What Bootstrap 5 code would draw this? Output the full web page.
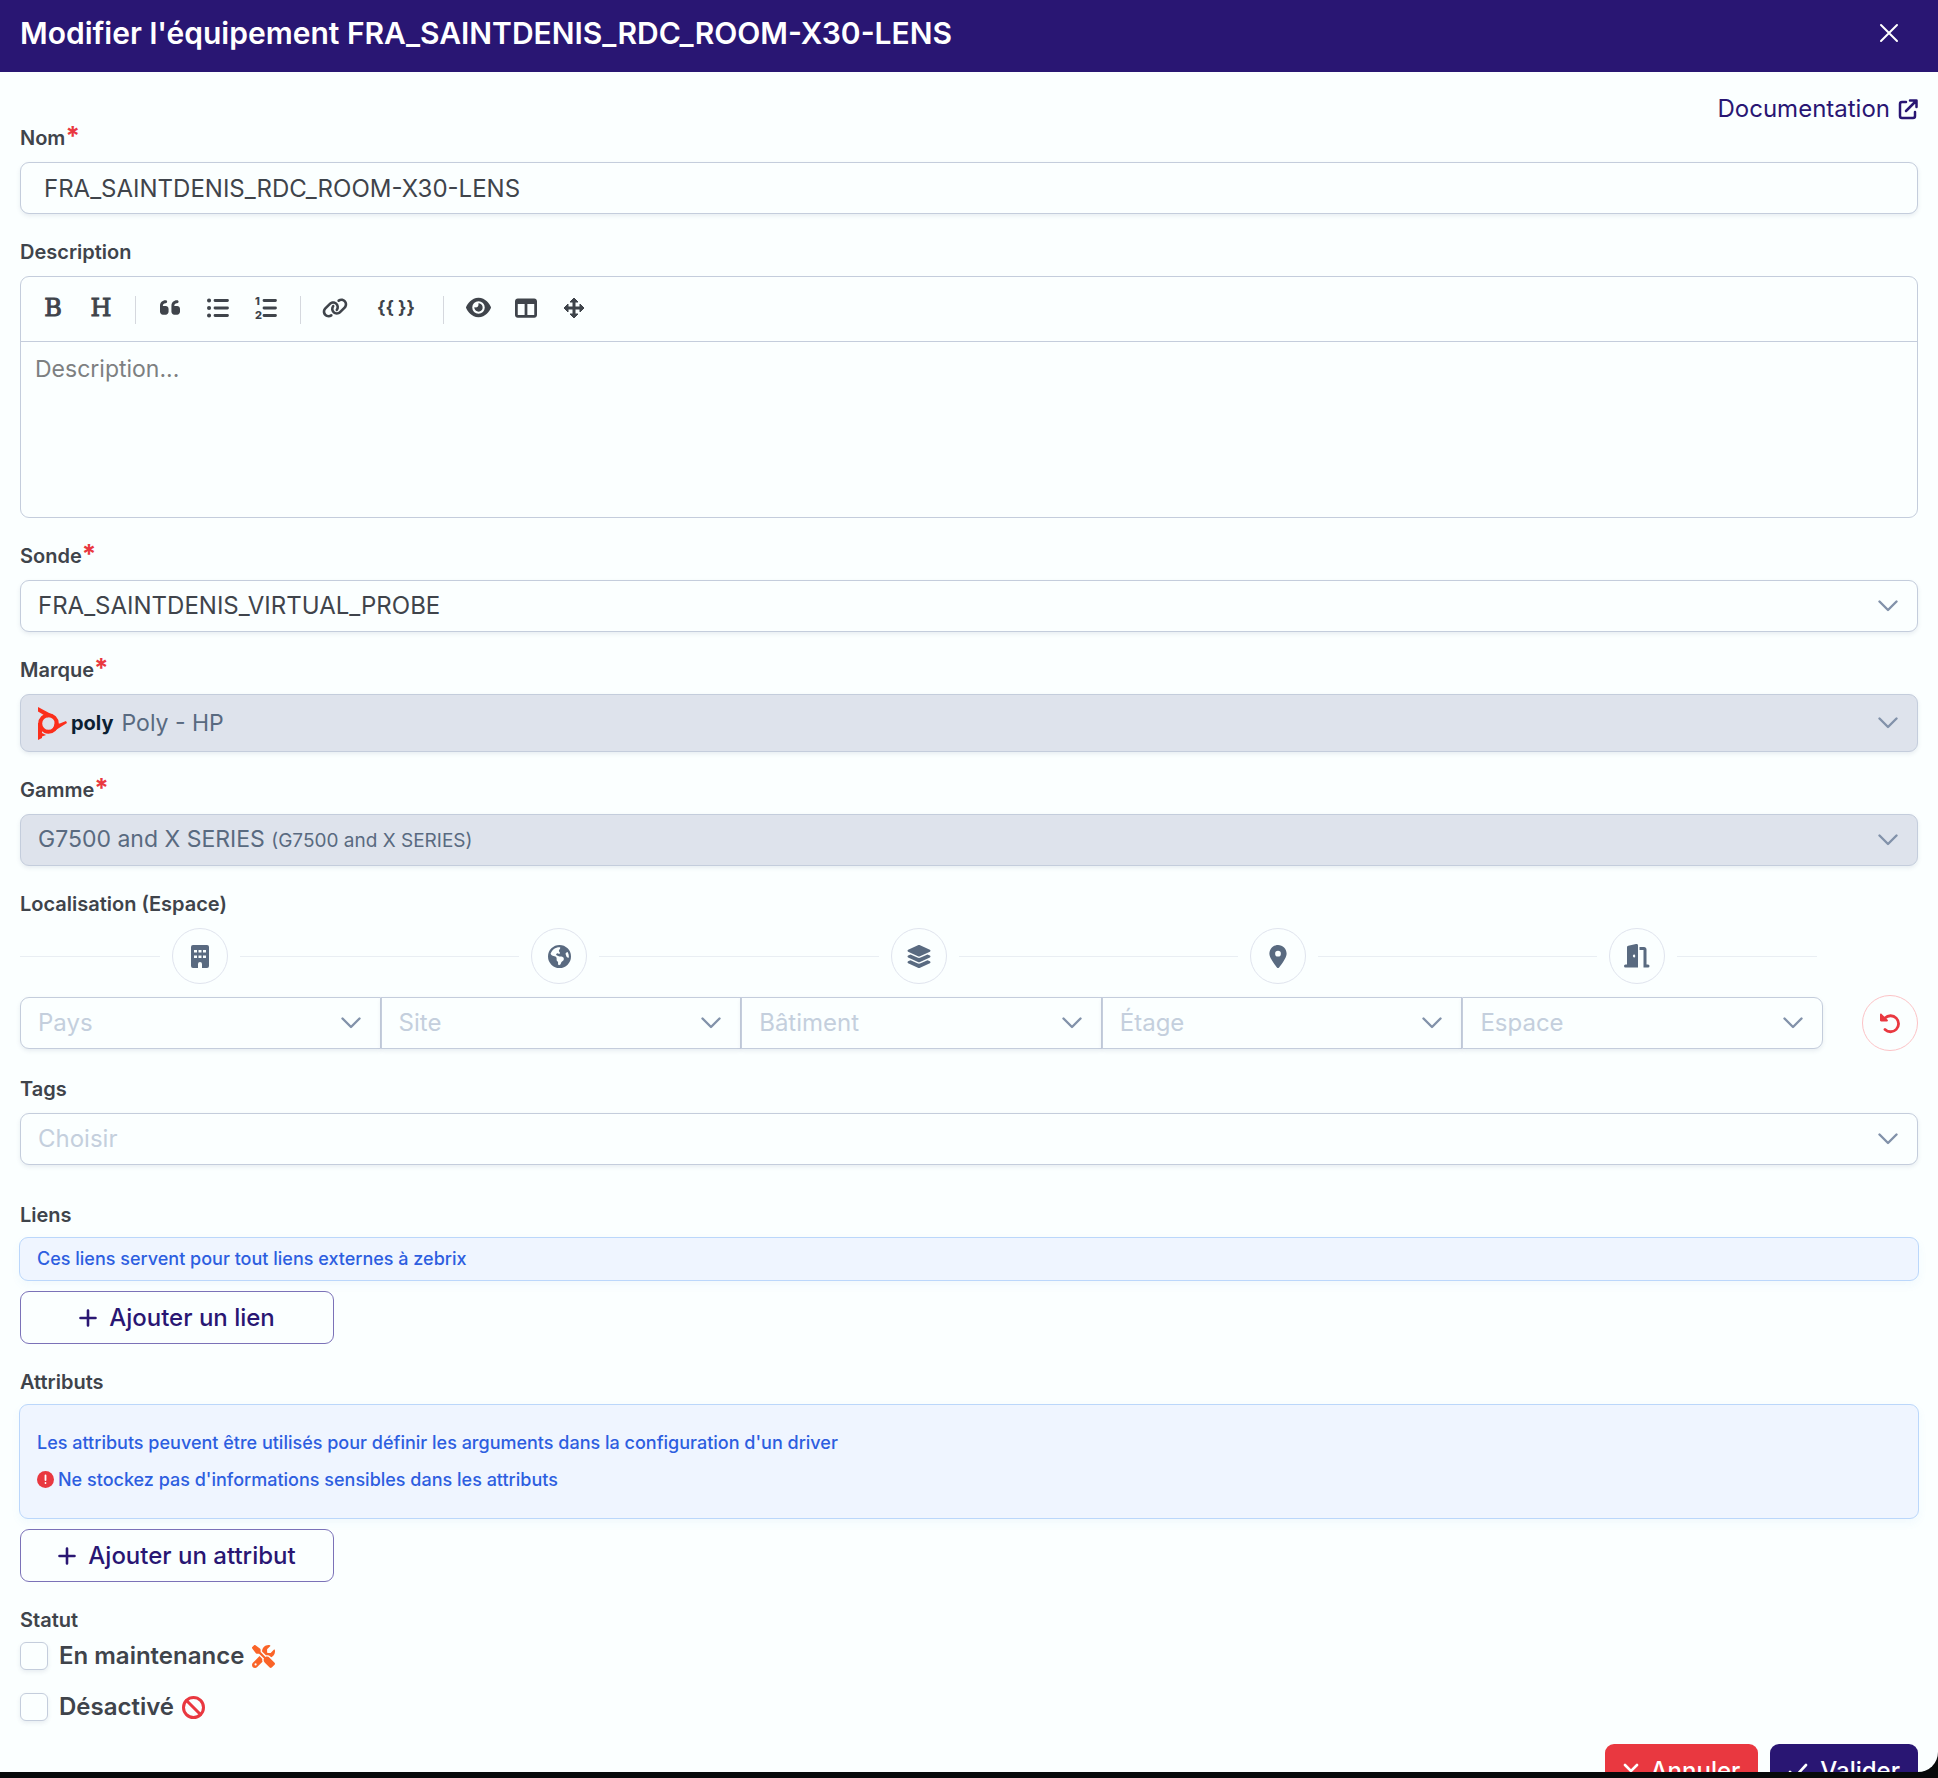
<!DOCTYPE html>
<html lang="fr">
<head>
<meta charset="utf-8">
<meta name="viewport" content="width=device-width, initial-scale=1">
<title>Modifier l'équipement</title>
<link href="https://cdn.jsdelivr.net/npm/bootstrap@5.3.0/dist/css/bootstrap.min.css" rel="stylesheet">
<style>
  :root { --ink: #3f444b; --brand: #291673; --edge: #c4cddc; --slate: #596a80; --danger: #e93840; --paper: #fbffff; }
  body { font-family: Inter, "Noto Sans", sans-serif; font-size: 24px; line-height: 34px; color: var(--ink); background: #07090a; height: 100vh; overflow: hidden; }
  svg { display: block; flex: none; fill: currentColor; overflow: visible; }
  .line-icon { fill: none; stroke: currentColor; stroke-linecap: round; stroke-linejoin: round; }
  .sheet { height: calc(100vh - 6px); background: var(--paper); border-bottom-right-radius: 20px; overflow: hidden; }
  .sheet-head { height: 72px; background: var(--brand); padding: 0 40px 6px 20px; }
  .sheet-title { font-size: 30px; font-weight: 600; line-height: 34px; }
  .plain-btn { background: none; border: 0; padding: 0; color: inherit; }
  .sheet-body { padding: 20px 20px 0; }
  .doc-link { color: var(--brand); }
  .field { margin-bottom: 26px; }
  .field-label { display: block; font-size: 20px; font-weight: 600; line-height: 24px; margin: 0 0 12px; }
  .label-tight { margin-bottom: 10px; }
  .field-label sup { color: var(--danger); font-size: 26px; line-height: 0; top: 0; font-weight: 700; vertical-align: baseline; }
  .form-control, .form-select { height: 52px; font-size: 24px; color: var(--ink); background-color: var(--paper); border: 1px solid var(--edge); border-radius: 9px; padding: 0 23px; box-shadow: 0 2px 4px rgba(60, 80, 120, .1); }
  .form-select { padding: 0 60px 0 17px; background-image: url("data:image/svg+xml,%3Csvg xmlns='http://www.w3.org/2000/svg' viewBox='0 0 20 12'%3E%3Cpath d='M1.5 1.5 10 10l8.500-8.500' fill='none' stroke='%238292aa' stroke-width='2.400' stroke-linecap='round' stroke-linejoin='round'/%3E%3C/svg%3E"); background-size: 20px 12px; background-position: right 19px center; }
  .form-select.unset { color: #c4cfdd; }
  .form-select:disabled { background-color: #dee3ec; color: transparent; opacity: 1; }
  .tall-select { height: 58px; }
  .rich-value { position: absolute; inset: 0 60px 0 18px; color: var(--slate); font-size: 23px; pointer-events: none; }
  .rich-value small { font-size: 19px; }
  .poly-word { color: #0b1f33; font-size: 20px; font-weight: 700; }
  .editor { border: 1px solid var(--edge); border-radius: 9px; }
  .editor-bar { height: 65px; border-bottom: 1px solid var(--edge); padding: 0 8px 3px; }
  .tool { width: 48px; height: 40px; display: flex; align-items: center; justify-content: center; }
  .tool-wide { width: 74px; font-size: 18px; font-weight: 700; }
  .slab { font-family: "DejaVu Serif", serif; font-size: 24px; -webkit-text-stroke: 1px currentColor; }
  .tool-sep { width: 1px; height: 28px; margin: 4px 10px 0; background: #d5d8de; }
  .editor textarea { height: 175px; border: 0; box-shadow: none; resize: none; background: transparent; padding: 10px 14px; font-size: 23px; line-height: 34px; display: block; }
  .editor textarea::placeholder { color: #7d8081; }
  .steps { padding-right: 101px; margin-bottom: 11px; }
  .step-line { height: 1px; background: #e9eef3; }
  .ring { width: 56px; height: 56px; border: 1px solid #e0e4ee; border-radius: 50%; color: var(--slate); display: flex; align-items: center; justify-content: center; flex: none; }
  .ring-reset { border: 1px solid #fbc3c6; color: var(--danger); }
  .places { gap: 39px; }
  .places .form-select { border-radius: 0; }
  .places .form-select:first-child { border-radius: 9px 0 0 9px; }
  .places .form-select:last-child { border-radius: 0 9px 9px 0; }
  .note { background: #eff5ff; border: 1px solid #bbd7fb; border-radius: 9px; color: #2d5ee0; font-size: 18px; font-weight: 500; line-height: 37px; margin: 0 -1px 10px; padding: 2px 17px 3px; box-shadow: 0 4px 10px rgba(60, 130, 220, .05); }
  .note-tall { padding: 19px 17px 20px; }
  .note p { margin: 0; }
  .add-btn { width: 314px; height: 53px; border: 1px solid #7b72b8; border-radius: 9px; color: var(--brand); background: var(--paper); font-size: 24px; font-weight: 500; gap: 12px; }
  .form-check-input.tick { width: 28px; height: 28px; margin: 0; border: 1px solid var(--edge); border-radius: 6px; background-color: var(--paper); box-shadow: 0 2px 4px rgba(60, 80, 120, .1); }
  .tick-row { height: 28px; gap: 11px; margin-bottom: 23px; font-weight: 600; }
  .act-btn { height: 53px; border: 0; border-radius: 9px; color: #fff; font-size: 24px; font-weight: 500; gap: 12px; padding: 0 18px; }
  .act-cancel { background: var(--danger); }
  .act-submit { background: var(--brand); }
  .icon-orange { color: #fa6428; }
  .icon-red { color: var(--danger); }
</style>
</head>
<body>
<main class="sheet d-flex flex-column">
  <header class="sheet-head d-flex align-items-center justify-content-between text-white flex-shrink-0">
    <h1 class="sheet-title m-0">Modifier l'équipement FRA_SAINTDENIS_RDC_ROOM-X30-LENS</h1>
    <button class="plain-btn" type="button" aria-label="Fermer"><svg class="line-icon" width="18" height="18" viewBox="0 0 18 18" stroke-width="2"><path d="M1 1l16 16M17 1L1 17"/></svg></button>
  </header>
  <form class="sheet-body">
    <div class="d-flex justify-content-end">
      <a class="doc-link d-flex align-items-center text-decoration-none gap-2" href="#">Documentation
        <svg class="line-icon" width="20" height="20" viewBox="0 0 20 20" stroke-width="2.500"><path d="M8 3H4a2 2 0 0 0-2 2v12a2 2 0 0 0 2 2h11a2 2 0 0 0 2-2v-4M12 1.500h6.500V8M18 2l-10 10"/></svg></a>
    </div>
    <div class="field">
      <label class="field-label" for="nom">Nom<sup>*</sup></label>
      <input class="form-control" id="nom" type="text" value="FRA_SAINTDENIS_RDC_ROOM-X30-LENS">
    </div>
    <div class="field">
      <label class="field-label" for="desc">Description</label>
      <div class="editor">
        <div class="editor-bar d-flex align-items-center">
          <button class="plain-btn tool slab" type="button" aria-label="Gras">B</button>
          <button class="plain-btn tool slab" type="button" aria-label="Titre">H</button>
          <span class="tool-sep"></span>
          <button class="plain-btn tool" type="button" aria-label="Citation"><svg width="20" height="23" viewBox="0 0 448 512"><path d="M0 216C0 149.700 53.700 96 120 96h8c17.700 0 32 14.300 32 32s-14.300 32-32 32h-8c-30.900 0-56 25.100-56 56v8h64c35.300 0 64 28.700 64 64v64c0 35.300-28.700 64-64 64H64c-35.300 0-64-28.700-64-64V216zm256 0c0-66.300 53.700-120 120-120h8c17.700 0 32 14.300 32 32s-14.300 32-32 32h-8c-30.900 0-56 25.100-56 56v8h64c35.300 0 64 28.700 64 64v64c0 35.300-28.700 64-64 64H320c-35.300 0-64-28.700-64-64V216z"/></svg></button>
          <button class="plain-btn tool" type="button" aria-label="Liste à puces"><svg class="line-icon" width="22" height="22" viewBox="0 0 22 22" stroke-width="2.800"><path d="M8 3.500h12.500M8 11h12.500M8 18.500h12.500"/><path d="M2 3.500h.1M2 11h.1M2 18.500h.1" stroke-width="4"/></svg></button>
          <button class="plain-btn tool" type="button" aria-label="Liste numérotée"><svg width="22" height="24" viewBox="0 0 22 24"><path class="line-icon" stroke-width="2.800" d="M9 4.500h11.500M9 12h11.500M9 19.500h11.500"/><text x="0" y="9" font-size="11" font-weight="800">1</text><text x="0" y="23" font-size="11" font-weight="800">2</text></svg></button>
          <span class="tool-sep"></span>
          <button class="plain-btn tool" type="button" aria-label="Lien"><svg width="26" height="22" viewBox="0 0 640 512"><path d="M579.800 267.700c56.500-56.500 56.500-148 0-204.500c-50-50-128.800-56.500-186.300-15.400l-1.600 1.100c-14.400 10.300-17.700 30.300-7.400 44.600s30.300 17.700 44.600 7.400l1.600-1.100c32.100-22.900 76-19.300 103.800 8.600c31.500 31.500 31.500 82.500 0 114L422.300 334.800c-31.500 31.500-82.500 31.500-114 0c-27.900-27.900-31.500-71.800-8.600-103.800l1.100-1.600c10.300-14.400 6.900-34.400-7.400-44.600s-34.400-6.900-44.600 7.400l-1.100 1.600C206.500 251.200 213 330 263 380c56.500 56.500 148 56.500 204.500 0L579.800 267.700zM60.200 244.300c-56.500 56.500-56.500 148 0 204.500c50 50 128.800 56.500 186.300 15.400l1.600-1.100c14.400-10.300 17.700-30.300 7.400-44.600s-30.300-17.700-44.600-7.400l-1.600 1.100c-32.100 22.900-76 19.300-103.800-8.600C74 372 74 321 105.500 289.500L217.700 177.200c31.500-31.500 82.500-31.500 114 0c27.900 27.900 31.500 71.800 8.600 103.900l-1.100 1.600c-10.300 14.400-6.900 34.400 7.400 44.600s34.400 6.900 44.600-7.400l1.100-1.600C433.500 260.800 427 182 377 132c-56.500-56.500-148-56.500-204.500 0L60.200 244.300z"/></svg></button>
          <button class="plain-btn tool tool-wide" type="button" aria-label="Variable">{{ }}</button>
          <span class="tool-sep"></span>
          <button class="plain-btn tool" type="button" aria-label="Aperçu"><svg width="25" height="23" viewBox="0 0 576 512"><path d="M288 32c-80.800 0-145.500 36.800-192.600 80.600C48.600 156 17.300 208 2.500 243.700c-3.300 7.900-3.300 16.700 0 24.600C17.300 304 48.600 356 95.400 399.400C142.500 443.200 207.200 480 288 480s145.500-36.800 192.600-80.600c46.800-43.500 78.100-95.400 93-131.100c3.300-7.900 3.300-16.700 0-24.600c-14.900-35.700-46.200-87.700-93-131.100C433.500 68.800 368.800 32 288 32zM144 256a144 144 0 1 1 288 0 144 144 0 1 1 -288 0zm144-64c0 35.300-28.700 64-64 64c-7.100 0-13.900-1.200-20.300-3.300c-5.500-1.800-11.900 1.600-11.700 7.400c.3 6.900 1.300 13.800 3.200 20.700c13.700 51.200 66.400 81.600 117.600 67.900s81.600-66.400 67.900-117.600c-11.100-41.500-47.800-69.400-88.600-71.100c-5.800-.2-9.200 6.100-7.400 11.700c2.100 6.400 3.300 13.200 3.300 20.300z"/></svg></button>
          <button class="plain-btn tool" type="button" aria-label="Côte à côte"><svg width="22" height="22" viewBox="0 0 512 512"><path d="M0 96C0 60.700 28.700 32 64 32H448c35.300 0 64 28.700 64 64V416c0 35.300-28.700 64-64 64H64c-35.300 0-64-28.700-64-64V96zm64 64V416H224V160H64zm384 0H288V416H448V160z"/></svg></button>
          <button class="plain-btn tool" type="button" aria-label="Plein écran"><svg width="22" height="22" viewBox="0 0 22 22" stroke="currentColor" stroke-width="1" stroke-linejoin="round"><path d="M11 1l4 4h-3v5h5V7l4 4-4 4v-3h-5v5h3l-4 4-4-4h3v-5H5v3l-4-4 4-4v3h5V5H7z"/></svg></button>
        </div>
        <textarea class="form-control" id="desc" placeholder="Description..."></textarea>
      </div>
    </div>
    <div class="field">
      <label class="field-label" for="sonde">Sonde<sup>*</sup></label>
      <select class="form-select" id="sonde"><option>FRA_SAINTDENIS_VIRTUAL_PROBE</option></select>
    </div>
    <div class="field">
      <label class="field-label" for="marque">Marque<sup>*</sup></label>
      <div class="position-relative">
        <select class="form-select tall-select" id="marque" disabled><option>Poly - HP</option></select>
        <div class="rich-value d-flex align-items-center">
          <svg class="me-1" width="29" height="33" viewBox="0 0 29 33"><path d="M0 0L13 7l-3 3.500L0 4.500z" fill="#fb2f1c"/><path d="M0 16h4v10l4 2-4 1.500V31L0 33z" fill="#fb2f1c"/><circle cx="10.500" cy="16.500" r="8.300" fill="none" stroke="#fb2f1c" stroke-width="4"/><path d="M17 14c2 3 4 3 6 2l5-2 1 2-8 5c-5 3-8 6-14 5 6 0 9-4 10-12z" fill="#fb2f1c"/></svg>
          <span class="poly-word me-2">poly</span><span>Poly - HP</span>
        </div>
      </div>
    </div>
    <div class="field">
      <label class="field-label" for="gamme">Gamme<sup>*</sup></label>
      <div class="position-relative">
        <select class="form-select" id="gamme" disabled><option>G7500 and X SERIES</option></select>
        <div class="rich-value d-flex align-items-center"><span>G7500 and X SERIES <small>(G7500 and X SERIES)</small></span></div>
      </div>
    </div>
    <div class="field">
      <span class="field-label" id="loc">Localisation (Espace)</span>
      <div class="steps d-flex">
        <div class="d-flex align-items-center gap-2 flex-fill"><span class="step-line flex-fill me-1"></span><span class="ring"><svg width="18" height="23" viewBox="0 0 18 23"><path fill-rule="evenodd" d="M2 0h14a2 2 0 0 1 2 2v19a2 2 0 0 1-2 2h-5v-4a2 2 0 0 0-4 0v4H2a2 2 0 0 1-2-2V2a2 2 0 0 1 2-2zM3 5v2.500h3V5zm4.500 0v2.500h3V5zM12 5v2.500h3V5zM3 10.500V13h3v-2.500zm4.500 0V13h3v-2.500zm4.500 0V13h3v-2.500z"/></svg></span><span class="step-line flex-fill ms-1"></span></div>
        <div class="d-flex align-items-center gap-2 flex-fill"><span class="step-line flex-fill me-1"></span><span class="ring"><svg width="23" height="23" viewBox="0 0 512 512"><path fill-rule="evenodd" d="M57.700 193l9.400 16.400c8.300 14.500 21.900 25.200 38 29.800L163 255.700c17.200 4.900 29 20.600 29 38.500v39.900c0 11 6.200 21 16 25.900s16 14.900 16 25.900v39c0 15.600 14.900 26.900 29.900 22.600c16.100-4.600 28.600-17.500 32.700-33.800l2.800-11.200c4.200-16.900 15.200-31.400 30.300-40l8.100-4.600c15-8.500 24.200-24.500 24.200-41.700v-8.300c0-12.700-5.100-24.900-14.100-33.900l-3.900-3.900c-9-9-21.200-14.100-33.900-14.100H257c-11.100 0-22.100-2.900-31.800-8.400l-34.500-19.700c-4.300-2.500-7.600-6.500-9.200-11.200c-3.200-9.600 1.100-20 10.200-24.500l5.900-3c6.600-3.300 14.300-3.900 21.300-1.500l23.200 7.700c8.200 2.700 17.200-.4 21.900-7.500c4.700-7 4.200-16.300-1.200-22.800l-13.600-16.300c-10-12-9.900-29.500 .3-41.300l15.700-18.300c8.800-10.300 10.200-25 3.500-36.700l-2.400-4.200c-3.500-.2-6.900-.3-10.400-.3C163.100 48 84.400 108.900 57.700 193zM464 256c0-36.800-9.600-71.400-26.400-101.500L412 164.800c-15.700 6.300-23.800 23.800-18.500 39.800l16.900 50.700c3.500 10.400 12 18.300 22.600 20.900l29.100 7.300c1.200-9 1.800-18.200 1.800-27.500zM0 256a256 256 0 1 1 512 0A256 256 0 1 1 0 256z"/></svg></span><span class="step-line flex-fill ms-1"></span></div>
        <div class="d-flex align-items-center gap-2 flex-fill"><span class="step-line flex-fill me-1"></span><span class="ring"><svg width="26" height="23" viewBox="0 0 576 512"><path d="M264.500 5.200c14.900-6.900 32.100-6.900 47 0l218.600 101c8.500 3.900 13.900 12.400 13.900 21.800s-5.400 17.900-13.900 21.800l-218.600 101c-14.900 6.900-32.100 6.900-47 0L45.900 149.800C37.400 145.800 32 137.300 32 128s5.400-17.900 13.900-21.800L264.500 5.200zM476.900 209.600l53.200 24.600c8.500 3.900 13.900 12.400 13.900 21.800s-5.400 17.900-13.900 21.800l-218.600 101c-14.900 6.900-32.100 6.900-47 0L45.900 277.800C37.400 273.800 32 265.300 32 256s5.400-17.900 13.900-21.800l53.200-24.600 152 70.200c23.400 10.800 50.400 10.800 73.800 0l152-70.200zm-152 198.200l152-70.200 53.200 24.600c8.500 3.900 13.900 12.400 13.900 21.800s-5.400 17.900-13.900 21.800l-218.600 101c-14.900 6.900-32.100 6.900-47 0L45.900 405.800C37.400 401.800 32 393.300 32 384s5.400-17.900 13.900-21.800l53.200-24.600 152 70.200c23.400 10.800 50.400 10.800 73.800 0z"/></svg></span><span class="step-line flex-fill ms-1"></span></div>
        <div class="d-flex align-items-center gap-2 flex-fill"><span class="step-line flex-fill me-1"></span><span class="ring"><svg width="18" height="23" viewBox="0 0 384 512"><path fill-rule="evenodd" d="M215.700 499.200C267 435 384 279.400 384 192C384 86 298 0 192 0S0 86 0 192c0 87.400 117 243 168.300 307.200c12.300 15.300 35.100 15.300 47.400 0zM192 128a64 64 0 1 1 0 128 64 64 0 1 1 0-128z"/></svg></span><span class="step-line flex-fill ms-1"></span></div>
        <div class="d-flex align-items-center gap-2 flex-fill"><span class="step-line flex-fill me-1"></span><span class="ring"><svg width="26" height="24" viewBox="0 0 26 24"><path fill-rule="evenodd" d="M3 3.500C3 2.500 3.500 2 4.300 1.800L12 0c1.300-.3 2 .3 2 1.500V23.500H1.500a1.500 1.500 0 0 1 0-3H3zM10 10.500a1.200 1.500 0 1 0 .1 3 1.200 1.500 0 0 0-.1-3z"/><path d="M15.500 3H20c1.500 0 2.500 1 2.500 2.500v15H24a1.500 1.500 0 0 1 0 3h-4.500V6h-4z"/></svg></span><span class="step-line flex-fill ms-1"></span></div>
      </div>
      <div class="places d-flex align-items-center">
        <div class="d-flex flex-fill" role="group" aria-labelledby="loc">
          <select class="form-select unset" aria-label="Pays"><option>Pays</option></select>
          <select class="form-select unset" aria-label="Site"><option>Site</option></select>
          <select class="form-select unset" aria-label="Bâtiment"><option>Bâtiment</option></select>
          <select class="form-select unset" aria-label="Étage"><option>Étage</option></select>
          <select class="form-select unset" aria-label="Espace"><option>Espace</option></select>
        </div>
        <button class="plain-btn ring ring-reset" type="button" aria-label="Réinitialiser"><svg width="21" height="21" viewBox="0 0 21 21"><path d="M5 5a8 8 0 1 1 0 11.500" fill="none" stroke="currentColor" stroke-width="2.800" stroke-linecap="round"/><path d="M0 1.500C0 .6 1 .3 1.600 1l6 5.800c.7.700.3 1.700-.7 1.700H1.200C.4 8.500 0 8 0 7.300z"/></svg></button>
      </div>
    </div>
    <div class="field">
      <label class="field-label" for="tags">Tags</label>
      <select class="form-select unset" id="tags"><option>Choisir</option></select>
    </div>
    <div class="field pt-2">
      <span class="field-label label-tight pt-1">Liens</span>
      <div class="note"><p>Ces liens servent pour tout liens externes à zebrix</p></div>
      <button class="add-btn d-flex align-items-center justify-content-center" type="button"><svg class="line-icon" width="18" height="18" viewBox="0 0 18 18" stroke-width="2.600"><path d="M9 1.500v15M1.500 9h15"/></svg>Ajouter un lien</button>
    </div>
    <div class="field">
      <span class="field-label label-tight">Attributs</span>
      <div class="note note-tall"><p>Les attributs peuvent être utilisés pour définir les arguments dans la configuration d'un driver</p>
        <p class="d-flex align-items-center gap-1"><svg width="17" height="17" viewBox="0 0 17 17"><circle cx="8.500" cy="8.500" r="8.500" fill="#e93840"/><path d="M8.500 4.500v4.500M8.500 12v.1" stroke="#fff" stroke-width="1.800" stroke-linecap="round"/></svg>Ne stockez pas d'informations sensibles dans les attributs</p></div>
      <button class="add-btn d-flex align-items-center justify-content-center" type="button"><svg class="line-icon" width="18" height="18" viewBox="0 0 18 18" stroke-width="2.600"><path d="M9 1.500v15M1.500 9h15"/></svg>Ajouter un attribut</button>
    </div>
    <span class="field-label label-tight">Statut</span>
    <div class="tick-row d-flex align-items-center">
      <input class="form-check-input tick" type="checkbox" id="maint"><label class="d-flex align-items-center gap-2" for="maint">En maintenance
      <svg class="icon-orange" width="23" height="23" viewBox="0 0 512 512"><path d="M78.600 5C69.100-2.400 55.600-1.500 47 7L7 47c-8.500 8.500-9.400 22-2.100 31.600l80 104c4.500 5.900 11.600 9.400 19 9.400h54.100l109 109c-14.700 29-10 65.400 14.300 89.600l112 112c12.500 12.500 32.800 12.500 45.300 0l64-64c12.500-12.500 12.500-32.800 0-45.300l-112-112c-24.200-24.200-60.600-29-89.600-14.300l-109-109V104c0-7.500-3.500-14.500-9.400-19L78.600 5zM19.900 396.100C7.200 408.800 0 426.100 0 444.100C0 481.600 30.400 512 67.900 512c18 0 35.300-7.200 48-19.900L233.700 374.300c-7.800-20.900-9-43.600-3.600-65.100l-61.700-61.700L19.900 396.100zM512 144c0-10.500-1.100-20.700-3.200-30.500c-2.400-11.200-16.100-14.100-24.200-6l-63.900 63.900c-3 3-7.100 4.700-11.300 4.700H352c-8.800 0-16-7.200-16-16V102.600c0-4.200 1.700-8.300 4.700-11.300l63.900-63.900c8.100-8.100 5.200-21.800-6-24.200C388.700 1.100 378.500 0 368 0C288.500 0 224 64.500 224 144l0 .8 85.300 85.300c36-9.100 75.800 .5 104 28.700L429 274.500c49-23 83-72.800 83-130.500zM56 432a24 24 0 1 1 48 0 24 24 0 1 1 -48 0z"/></svg></label>
    </div>
    <div class="tick-row d-flex align-items-center">
      <input class="form-check-input tick" type="checkbox" id="off"><label class="d-flex align-items-center gap-2" for="off">Désactivé
      <svg class="icon-red line-icon" width="23" height="23" viewBox="0 0 23 23" stroke-width="3"><circle cx="11.500" cy="11.500" r="10"/><path d="M4.500 4.500l14 14"/></svg></label>
    </div>
    <div class="d-flex justify-content-end">
      <button class="act-btn act-cancel d-flex align-items-center me-2" type="button"><svg class="line-icon" width="16" height="16" viewBox="0 0 16 16" stroke-width="2.600"><path d="M2 2l12 12M14 2L2 14"/></svg>Annuler</button>
      <button class="act-btn act-submit d-flex align-items-center ms-1" type="submit"><svg class="line-icon" width="20" height="16" viewBox="0 0 20 16" stroke-width="2.600"><path d="M2 9l5 5L18 2"/></svg>Valider</button>
    </div>
  </form>
</main>
<script src="https://cdn.jsdelivr.net/npm/bootstrap@5.3.0/dist/js/bootstrap.bundle.min.js"></script>
</body>
</html>
